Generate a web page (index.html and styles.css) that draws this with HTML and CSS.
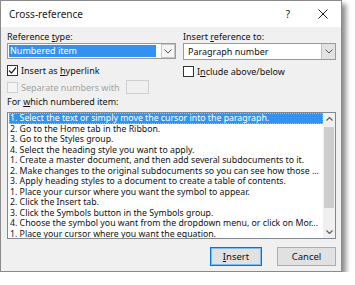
FILE: index.html
```html
<!DOCTYPE html>
<html lang="en">
<head>
    <meta charset="UTF-8">
    <title>Cross-reference</title>
    <link rel="stylesheet" href="styles.css">
</head>
<body>

<div class="dialog">
    <div class="titlebar">
        <span class="title">Cross-reference</span>
        <span class="help">?</span>
        <span class="close">
            <svg width="10" height="10" viewBox="0 0 10 10"><path d="M0.5 0.5 L9.5 9.5 M9.5 0.5 L0.5 9.5" stroke="#222" stroke-width="1"/></svg>
        </span>
    </div>

    <div class="content">
        <div class="top">
            <div class="col left">
                <div class="caption">Reference <u>t</u>ype:</div>
                <div class="select">
                    <span class="value selected">Numbered item</span>
                    <span class="drop">
                        <svg width="8" height="5" viewBox="0 0 8 5"><path d="M0.5 0.5 L4 4 L7.5 0.5" fill="none" stroke="#555" stroke-width="1"/></svg>
                    </span>
                </div>
                <div class="check">
                    <span class="box">
                        <svg width="9" height="9" viewBox="0 0 9 9"><path d="M1 4.5 L3.5 7 L8 1.5" fill="none" stroke="#222" stroke-width="1.2"/></svg>
                    </span>
                    <span>Insert as <u>h</u>yperlink</span>
                </div>
                <div class="check disabled">
                    <span class="box"></span>
                    <span>Separate numbers with</span>
                    <span class="sep-input"></span>
                </div>
            </div>
            <div class="col right">
                <div class="caption">Insert <u>r</u>eference to:</div>
                <div class="select plain">
                    <span class="value">Paragraph number</span>
                    <span class="drop">
                        <svg width="8" height="5" viewBox="0 0 8 5"><path d="M0.5 0.5 L4 4 L7.5 0.5" fill="none" stroke="#555" stroke-width="1"/></svg>
                    </span>
                </div>
                <div class="check">
                    <span class="box"></span>
                    <span>I<u>n</u>clude above/below</span>
                </div>
            </div>
        </div>

        <div class="caption list-caption">For <u>w</u>hich numbered item:</div>
        <div class="list">
            <ul class="items">
                <li class="active">1. Select the text or simply move the cursor into the paragraph.</li>
                <li>2. Go to the Home tab in the Ribbon.</li>
                <li>3. Go to the Styles group.</li>
                <li>4. Select the heading style you want to apply.</li>
                <li>1. Create a master document, and then add several subdocuments to it.</li>
                <li>2. Make changes to the original subdocuments so you can see how those ...</li>
                <li>3. Apply heading styles to a document to create a table of contents.</li>
                <li>1. Place your cursor where you want the symbol to appear.</li>
                <li>2. Click the Insert tab.</li>
                <li>3. Click the Symbols button in the Symbols group.</li>
                <li>4. Choose the symbol you want from the dropdown menu, or click on Mor...</li>
                <li>1. Place your cursor where you want the equation.</li>
            </ul>
            <div class="scrollbar">
                <span class="arrow">
                    <svg width="7" height="4" viewBox="0 0 7 4"><path d="M0.5 3.5 L3.5 0.5 L6.5 3.5" fill="none" stroke="#606060" stroke-width="1.2"/></svg>
                </span>
                <div class="track"><div class="thumb"></div></div>
                <span class="arrow">
                    <svg width="7" height="4" viewBox="0 0 7 4"><path d="M0.5 0.5 L3.5 3.5 L6.5 0.5" fill="none" stroke="#606060" stroke-width="1.2"/></svg>
                </span>
            </div>
        </div>

        <div class="buttons">
            <button class="btn default"><u>I</u>nsert</button>
            <button class="btn cancel">Cancel</button>
        </div>
    </div>
</div>

</body>
</html>
```

FILE: styles.css
```css
/* Dialogo estilo Windows */
body {
    margin: 0;
    background-color: #ffffff;
    font-family: 'Noto Sans', 'Open Sans', sans-serif;
    font-size: 9px;
    color: #111;
}
u {
    text-decoration-thickness: 1px;
    text-underline-offset: 1px;
}
.dialog {
    width: 342px;
    height: 272px;
    box-sizing: border-box;
    border: 1px solid #8a8a8a;
    background-color: #f0f0f0;
    box-shadow: 4px 4px 5px rgba(0, 0, 0, 0.45);
}
.titlebar {
    height: 26px;
    background-color: #ffffff;
    display: flex;
    align-items: center;
    padding-left: 8px;
}
.title {
    flex: 1;
    font-size: 10px;
    color: #1a1a1a;
}
.help {
    width: 14px;
    text-align: center;
    font-size: 10px;
    margin-right: 23px;
}
.close {
    width: 10px;
    height: 10px;
    margin-right: 13px;
    display: flex;
}
.content {
    padding: 0 5px 0 6px;
}
.top {
    display: flex;
    gap: 7px;
}
.col.left {
    width: 169px;
}
.col.right {
    flex: 1;
}
.caption {
    padding-top: 4px;
    line-height: 12px;
    height: 12px;
}
.select {
    height: 16px;
    box-sizing: border-box;
    border: 1px solid #9a9a9a;
    background-color: #ffffff;
    display: flex;
    align-items: stretch;
    padding: 1px;
}
.select .value {
    flex: 1;
    line-height: 12px;
    padding-left: 2px;
    margin-right: 5px;
}
.select .value.selected {
    background-color: #3391f0;
    color: #ffffff;
    padding-left: 1px;
}
.select .drop {
    width: 12px;
    display: flex;
    align-items: center;
    justify-content: center;
    border: 1px solid #c8c8c8;
    background-color: #f4f4f4;
    margin: -1px -1px -1px 0;
}
.select.plain {
    height: 17px;
}
.select.plain .value {
    padding-left: 3px;
    line-height: 13px;
}
.select.plain .drop {
    width: 13px;
    border: none;
    border-left: 1px solid #c0c0c0;
    background-color: #e2e2e2;
    margin: -1px -1px -1px 0;
}
.check {
    display: flex;
    align-items: center;
    gap: 3px;
    margin-top: 6px;
    height: 11px;
    line-height: 11px;
}
.check .box {
    width: 11px;
    height: 11px;
    box-sizing: border-box;
    border: 1px solid #333;
    background-color: #ffffff;
    display: flex;
    align-items: center;
    justify-content: center;
}
.check.disabled {
    margin-top: 4px;
    height: 14px;
    color: #a3a3a3;
}
.check.disabled .box {
    border-color: #cfcfcf;
    background-color: #f4f4f4;
}
.sep-input {
    width: 23px;
    height: 14px;
    box-sizing: border-box;
    border: 1px solid #cfcfcf;
    background-color: #f0f0f0;
    margin-left: 3px;
}
.list-caption {
    padding-top: 2px;
}
.list {
    margin-top: 4px;
    height: 127px;
    box-sizing: border-box;
    border: 1px solid #828790;
    background-color: #ffffff;
    display: flex;
}
.items {
    flex: 1;
    list-style: none;
    margin: 0;
    padding: 0 0 0 1px;
    overflow: hidden;
    font-size: 8.75px;
}
.items li {
    height: 10.5px;
    line-height: 10.5px;
    padding-left: 1px;
    white-space: nowrap;
}
.items li.active {
    background-color: #3391f0;
    color: #ffffff;
    outline: 1px dotted #8fc3f7;
    outline-offset: -1px;
}
.scrollbar {
    width: 12px;
    background-color: #f0f0f0;
    display: flex;
    flex-direction: column;
}
.scrollbar .arrow {
    height: 12px;
    display: flex;
    align-items: center;
    justify-content: center;
}
.track {
    flex: 1;
    padding: 2px 0;
}
.thumb {
    height: 81px;
    margin: 0 1px;
    background-color: #cdcdcd;
}
.buttons {
    display: flex;
    justify-content: flex-end;
    gap: 15px;
    margin-top: 8px;
}
.btn {
    height: 19px;
    font-family: 'Noto Sans', 'Open Sans', sans-serif;
    font-size: 9.5px;
    color: #111;
    background-color: #e1e1e1;
    border: 1px solid #adadad;
    padding: 0;
}
.btn.default {
    width: 52px;
    border-color: #0078d7;
    box-shadow: inset 0 0 0 1px #7fbbec;
}
.btn.cancel {
    width: 59px;
}
```
